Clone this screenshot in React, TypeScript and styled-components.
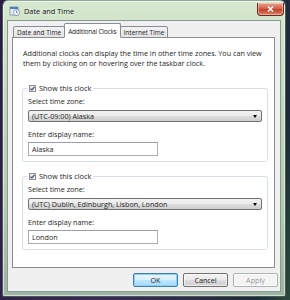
import React from 'react';
import styled, { createGlobalStyle } from 'styled-components';

const GlobalStyle = createGlobalStyle`
  html, body {
    margin: 0;
    padding: 0;
    width: 290px;
    height: 300px;
    overflow: hidden;
  }
  body {
    background: linear-gradient(100deg, #2a1c44 0%, #3b2b5c 50%, #1d2a3a 90%, #2a4a3a 100%);
    font-family: "Open Sans", "Noto Sans", sans-serif;
    color: #1e1e1e;
  }
`;

const Screen = styled.div`
  padding: 0 4px 0 2px;
`;

const Window = styled.div`
  width: 284px;
  height: 297px;
  box-sizing: border-box;
  border: 1px solid #4a5a52;
  border-top-color: #8fa898;
  border-radius: 6px 6px 2px 2px;
  background: linear-gradient(to bottom, #d6e8cf 0%, #c4dbbd 30%, #b3cbb0 70%, #9db3a4 100%);
  box-shadow: inset 0 0 0 1px rgba(255, 255, 255, 0.55);
  display: flex;
  flex-direction: column;
  padding: 0 4px 4px 4px;
`;

const TitleBar = styled.div`
  height: 19px;
  display: flex;
  align-items: center;
  gap: 4px;
  padding-left: 2px;
`;

const TitleText = styled.span`
  font-size: 7.4px;
  color: #111;
  text-shadow: 0 0 4px rgba(255, 255, 255, 0.9);
`;

const CloseButton = styled.div`
  margin-left: auto;
  margin-right: -3px;
  margin-top: -2px;
  width: 27px;
  height: 13px;
  box-sizing: border-box;
  border: 1px solid #6b2a22;
  border-top: none;
  border-radius: 0 0 4px 4px;
  background: linear-gradient(to bottom, #e8a493 0%, #d5634a 45%, #c1412a 55%, #d9866a 100%);
  box-shadow: inset 0 0 0 1px rgba(255, 220, 200, 0.5);
  display: flex;
  align-items: center;
  justify-content: center;
`;

const Client = styled.div`
  flex: 1;
  background: #f0f0f0;
  border: 1px solid #8a9c92;
  display: flex;
  flex-direction: column;
  padding: 2px 2px 0 4px;
`;

const TabStrip = styled.div`
  display: flex;
  align-items: flex-end;
  height: 15px;
  padding-left: 1px;
  position: relative;
  z-index: 1;
  margin-bottom: -1px;
`;

const Tab = styled.div<{ active?: boolean }>`
  font-size: 6.5px;
  letter-spacing: ${p => (p.active ? '-0.2px' : '0')};
  box-sizing: border-box;
  height: ${p => (p.active ? '15px' : '12px')};
  padding: ${p => (p.active ? '1px 3px 0' : '0 3px')};
  margin: ${p => (p.active ? '0 -1px' : '0')};
  display: flex;
  align-items: center;
  border: 1px solid #898c95;
  border-bottom: ${p => (p.active ? '1px solid #fff' : '1px solid #898c95')};
  border-radius: 2px 2px 0 0;
  background: ${p => (p.active ? '#fff' : 'linear-gradient(to bottom, #f3f3f3, #e3e3e3)')};
  white-space: nowrap;
  position: relative;
  z-index: ${p => (p.active ? 2 : 1)};
`;

const Panel = styled.div`
  height: 231px;
  box-sizing: border-box;
  margin-right: 3px;
  background: #fff;
  border: 1px solid #898c95;
  padding: 10px 6px 0 9px;
  display: flex;
  flex-direction: column;
`;

const Intro = styled.p`
  margin: 0 0 15px 1px;
  font-size: 7.2px;
  line-height: 10px;
`;

const Group = styled.fieldset`
  margin: 0 0 9px 0;
  padding: 0 5px 5px 5px;
  border: 1px solid #d5dfe5;
  border-radius: 3px;
  display: flex;
  flex-direction: column;
`;

const Legend = styled.legend`
  padding: 0 2px 0 1px;
  display: flex;
  align-items: center;
  gap: 3px;
  font-size: 7.4px;
  line-height: 10px;
`;

const CheckBox = styled.span`
  width: 7px;
  height: 7px;
  box-sizing: border-box;
  border: 1px solid #8f8f8f;
  background: linear-gradient(135deg, #e4e4e4, #fafafa);
  display: flex;
  align-items: center;
  justify-content: center;
`;

const Label = styled.div`
  font-size: 7.2px;
  line-height: 10px;
  margin: 3px 0 4px 0;
`;

const NameLabel = styled(Label)`
  margin: 0 0 3px 0;
`;

const Combo = styled.div`
  height: 12px;
  box-sizing: border-box;
  border: 1px solid #707070;
  border-radius: 2px;
  background: linear-gradient(to bottom, #f2f2f2 0%, #ebebeb 50%, #dddddd 51%, #cfcfcf 100%);
  display: flex;
  align-items: center;
  padding: 0 4px 0 3px;
  font-size: 7.2px;
  margin-bottom: 7px;
`;

const Arrow = styled.span`
  margin-left: auto;
  width: 0;
  height: 0;
  border-left: 2.5px solid transparent;
  border-right: 2.5px solid transparent;
  border-top: 3px solid #000;
`;

const TextInput = styled.div`
  width: 130px;
  height: 14px;
  box-sizing: border-box;
  border: 1px solid #abadb3;
  border-top-color: #9aa0a8;
  background: #fff;
  display: flex;
  align-items: center;
  padding-left: 3px;
  font-size: 7.2px;
`;

const ButtonRow = styled.div`
  display: flex;
  justify-content: flex-end;
  gap: 5px;
  padding-top: 5px;
`;

const Button = styled.div<{ variant?: 'default' | 'disabled' }>`
  width: 45px;
  height: 14px;
  box-sizing: border-box;
  border-radius: 2px;
  border: 1px solid ${p => (p.variant === 'default' ? '#3c7fb1' : p.variant === 'disabled' ? '#adb2b5' : '#707070')};
  background: ${p =>
    p.variant === 'disabled'
      ? '#f4f4f4'
      : p.variant === 'default'
      ? 'linear-gradient(to bottom, #eaf6fd 0%, #d9f0fc 50%, #bee6fd 51%, #a7d9f5 100%)'
      : 'linear-gradient(to bottom, #f2f2f2 0%, #ebebeb 50%, #dddddd 51%, #cfcfcf 100%)'};
  box-shadow: ${p => (p.variant === 'default' ? 'inset 0 0 0 1px #8fd0f3' : 'inset 0 0 0 1px rgba(255,255,255,0.6)')};
  color: ${p => (p.variant === 'disabled' ? '#9a9a9a' : '#1e1e1e')};
  font-size: 7.2px;
  display: flex;
  align-items: center;
  justify-content: center;
`;

const Check = () => (
  <svg width="5" height="5" viewBox="0 0 5 5">
    <path d="M0.5 2.6 L1.9 4 L4.5 0.8" fill="none" stroke="#2c3c6c" strokeWidth="1.1" />
  </svg>
);

const TitleIcon = () => (
  <svg width="11" height="11" viewBox="0 0 11 11">
    <rect x="1" y="2" width="8" height="8" fill="#e9eef5" stroke="#7a8aa6" strokeWidth="0.8" />
    <rect x="1" y="2" width="8" height="2" fill="#4d7fc4" />
    <circle cx="7.5" cy="7.5" r="3" fill="#fff" stroke="#5a86b8" strokeWidth="0.8" />
    <path d="M7.5 5.8 V7.5 H8.8" fill="none" stroke="#333" strokeWidth="0.6" />
  </svg>
);

const CloseX = () => (
  <svg width="7" height="6" viewBox="0 0 7 6">
    <path d="M1 0.5 L6 5.5 M6 0.5 L1 5.5" stroke="#fff" strokeWidth="1.5" />
  </svg>
);

const clocks = [
  { zone: '(UTC-09:00) Alaska', name: 'Alaska' },
  { zone: '(UTC) Dublin, Edinburgh, Lisbon, London', name: 'London' },
];

export default function App() {
  return (
    <>
      <GlobalStyle />
      <Screen>
        <Window>
          <TitleBar>
            <TitleIcon />
            <TitleText>Date and Time</TitleText>
            <CloseButton>
              <CloseX />
            </CloseButton>
          </TitleBar>
          <Client>
            <TabStrip>
              <Tab>Date and Time</Tab>
              <Tab active>Additional Clocks</Tab>
              <Tab>Internet Time</Tab>
            </TabStrip>
            <Panel>
              <Intro>
                Additional clocks can display the time in other time zones. You can view them by
                clicking on or hovering over the taskbar clock.
              </Intro>
              {clocks.map(c => (
                <Group key={c.name}>
                  <Legend>
                    <CheckBox>
                      <Check />
                    </CheckBox>
                    Show this clock
                  </Legend>
                  <Label>Select time zone:</Label>
                  <Combo>
                    {c.zone}
                    <Arrow />
                  </Combo>
                  <NameLabel>Enter display name:</NameLabel>
                  <TextInput>{c.name}</TextInput>
                </Group>
              ))}
            </Panel>
            <ButtonRow>
              <Button variant="default">OK</Button>
              <Button>Cancel</Button>
              <Button variant="disabled">Apply</Button>
            </ButtonRow>
          </Client>
        </Window>
      </Screen>
    </>
  );
}
